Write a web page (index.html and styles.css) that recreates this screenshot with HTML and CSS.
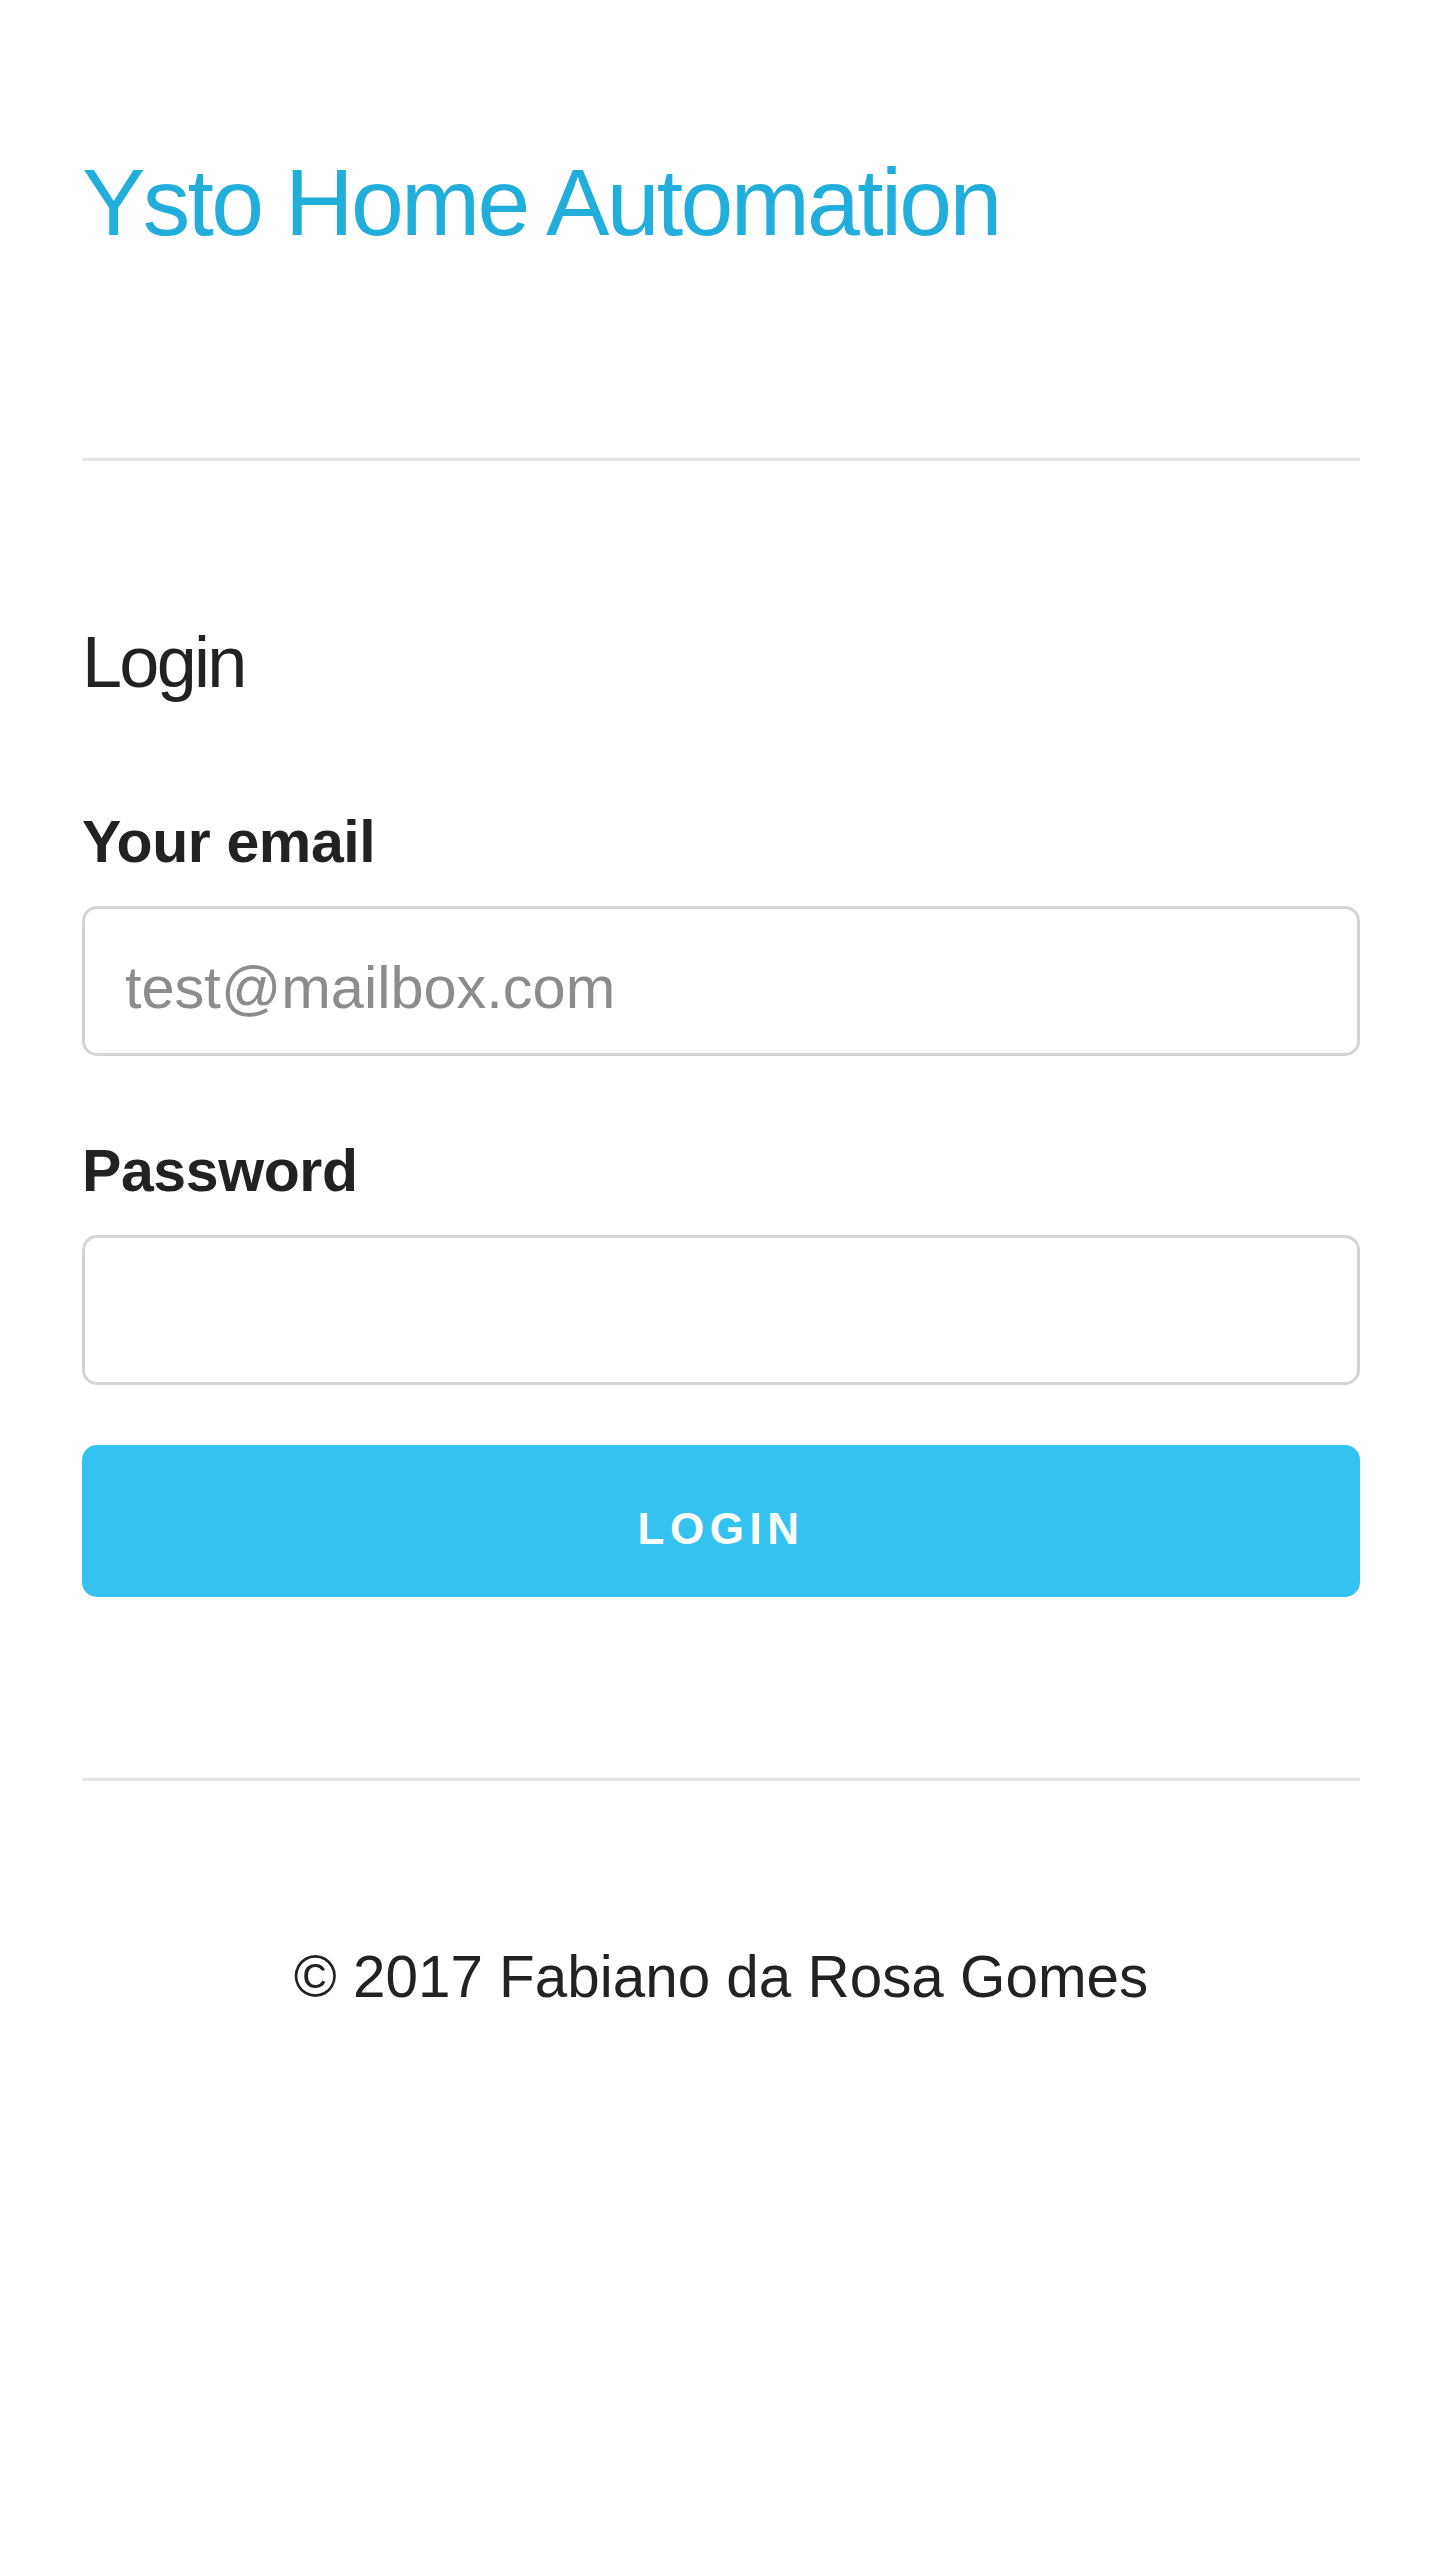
FILE: index.html
```html
<!DOCTYPE html>
<html lang="en">
<head>
<meta charset="utf-8">
<title>Ysto Home Automation - Login</title>
<link rel="stylesheet" href="styles.css">
</head>
<body>
<div class="page">
  <header class="site-header">
    <h1 class="site-title">Ysto Home Automation</h1>
  </header>
  <hr class="divider">
  <main class="login">
    <h2 class="login-heading">Login</h2>
    <form class="login-form">
      <div class="field">
        <label class="field-label" for="email">Your email</label>
        <input class="field-input" id="email" type="email" placeholder="test@mailbox.com">
      </div>
      <div class="field field--last">
        <label class="field-label" for="password">Password</label>
        <input class="field-input" id="password" type="password">
      </div>
      <button class="login-button" type="submit">Login</button>
    </form>
  </main>
  <hr class="divider">
  <footer class="site-footer">© 2017 Fabiano da Rosa Gomes</footer>
</div>
</body>
</html>
```
FILE: styles.css
```css
* {
  box-sizing: border-box;
}

body {
  margin: 0;
  background: #ffffff;
  color: #222222;
  font-family: "Liberation Sans", Arial, Helvetica, sans-serif;
}

.page {
  width: 1278px;
  margin-left: 82px;
}

.site-header {
  height: 458px;
  padding-top: 143px;
}

.site-title {
  margin: 0;
  font-size: 95px;
  line-height: 118px;
  font-weight: 400;
  letter-spacing: -2.7px;
  color: #21aedb;
}

.divider {
  display: block;
  height: 3px;
  margin: 0;
  border: 0;
  background: #e5e5e5;
}

.login {
  padding-top: 156px;
  padding-bottom: 181px;
}

.login-heading {
  margin: 0 0 100px;
  font-size: 72px;
  line-height: 90px;
  font-weight: 400;
  letter-spacing: -2.7px;
  color: #222222;
}

.login-form {
  display: flex;
  flex-direction: column;
}

.field {
  display: flex;
  flex-direction: column;
  margin-bottom: 80px;
}

.field--last {
  margin-bottom: 60px;
}

.field-label {
  display: block;
  margin-bottom: 29px;
  font-size: 59px;
  line-height: 70px;
  font-weight: 700;
  letter-spacing: -0.4px;
  color: #222222;
}

.field-input {
  display: block;
  width: 100%;
  height: 150px;
  margin: 0;
  padding: 12px 40px 0;
  border: 3px solid #d4d4d4;
  border-radius: 15px;
  background: #ffffff;
  font-family: "Liberation Sans", Arial, Helvetica, sans-serif;
  font-size: 59.5px;
  color: #222222;
  outline: none;
  -webkit-appearance: none;
  appearance: none;
}

.field-input::placeholder {
  color: #8c8c8c;
  opacity: 1;
}

.login-button {
  display: block;
  width: 100%;
  height: 152px;
  margin: 0;
  padding: 16px 0 0;
  border: 0;
  border-radius: 15px;
  background: #34c3f0;
  color: #ffffff;
  font-family: "Liberation Sans", Arial, Helvetica, sans-serif;
  font-size: 44px;
  font-weight: 700;
  letter-spacing: 5.5px;
  text-transform: uppercase;
  cursor: pointer;
}

.site-footer {
  padding-top: 161px;
  font-size: 58.4px;
  line-height: 70px;
  text-align: center;
  color: #222222;
}
```
